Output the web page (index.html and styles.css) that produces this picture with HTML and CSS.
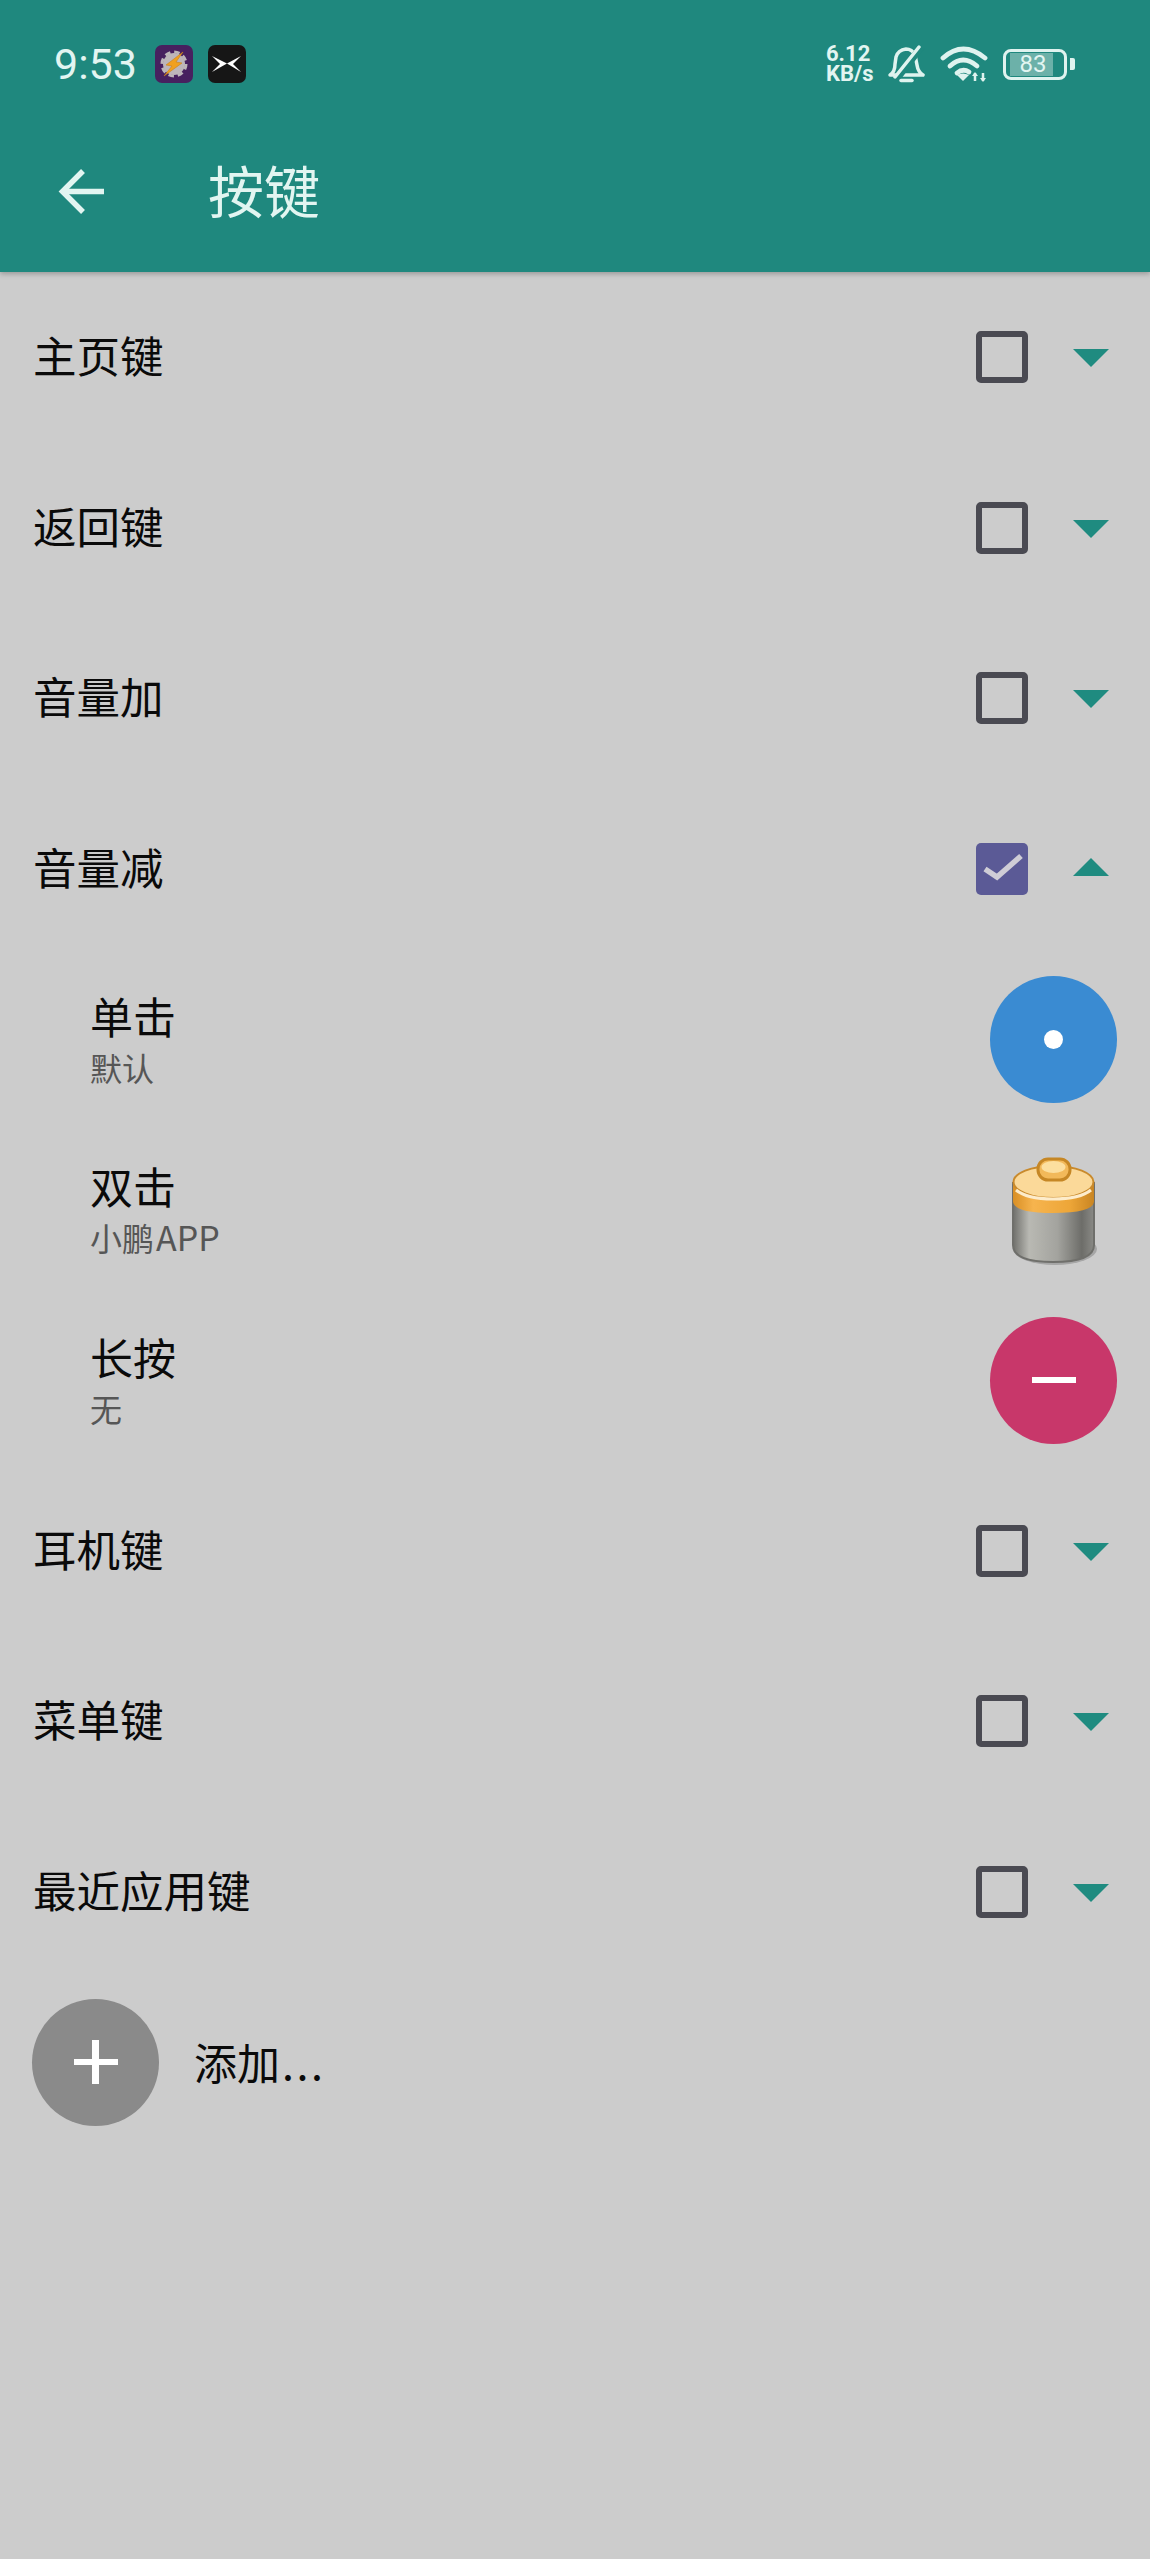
FILE: index.html
```html
<!DOCTYPE html>
<html lang="zh-CN">
<head>
    <meta charset="UTF-8">
    <meta name="viewport" content="width=device-width, initial-scale=1.0">
    <title>按键</title>
    <link rel="stylesheet" href="styles.css">
</head>
<body>
    <div id="wrapper">
        <header class="top">
            <div class="status">
                <span class="time">9:53</span>
                <svg class="app-icon tasker" viewBox="0 0 38 38">
                    <rect width="38" height="38" rx="7" fill="#47205f"/>
                    <circle cx="19" cy="19" r="11" fill="#bdb6ba"/>
                    <circle cx="19" cy="19" r="12" fill="none" stroke="#bdb6ba" stroke-width="3" stroke-dasharray="5.500 3.900"/>
                    <path d="M28 7 L11 20 L17 21 L9 31 L27 18 L21 17 Z" fill="#f0a020" stroke="#c9821a" stroke-width="0.600"/>
                </svg>
                <svg class="app-icon xpeng" viewBox="0 0 38 38">
                    <rect width="38" height="38" rx="7" fill="#161616"/>
                    <path d="M4 11 L19 18.500 L4 27 L12 19 Z M33 11 L19 18.500 L33 27 L25 19 Z" fill="#fff"/>
                </svg>
                <div class="status-right">
                    <div class="speed"><span>6.12</span><span>KB/s</span></div>
                    <svg class="ico-bell" viewBox="0 0 38 38" fill="none" stroke="#dff3ef" stroke-width="3.500" stroke-linecap="round" stroke-linejoin="round">
                        <path d="M3 30 Q8 27 8 19 L9 12 Q11 5 19 4 Q25 4 28 10 L30 20 Q31 27 36 30 Z"/>
                        <path d="M35 1 L11 32" stroke="#1f887e" stroke-width="7"/>
                        <path d="M32 2 L8 32"/>
                        <path d="M14 35.500 L25 35.500"/>
                    </svg>
                    <svg class="ico-wifi" viewBox="0 0 48 36" fill="none" stroke="#dff3ef" stroke-width="4.800" stroke-linecap="round">
                        <path d="M3 12 Q23 -6 45 12"/>
                        <path d="M10 20 Q23 8 37 20"/>
                        <path d="M17 27 Q23 22 29 26"/>
                        <path d="M23 35 L17 29 Q23 26 29 29 Z" fill="#dff3ef" stroke="none"/>
                        <path d="M35 27 L35 35 M43 27 L43 35" stroke-width="2.500" stroke-linecap="butt"/>
                        <path d="M32 30 L35 26 L38 30 Z M40 32 L43 36 L46 32 Z" fill="#dff3ef" stroke="none"/>
                    </svg>
                    <div class="battery">
                        <div class="battery-body"><span class="battery-level"></span><span class="battery-num">83</span></div>
                        <span class="battery-nub"></span>
                    </div>
                </div>
            </div>
            <div class="toolbar">
                <svg class="back" viewBox="0 0 48 48" fill="none" stroke="#e2f5f1" stroke-width="5.500">
                    <path d="M47 25.500 L6 25.500"/>
                    <path d="M26 5 L5.500 25.500 L26 46"/>
                </svg>
                <h1 class="title">按键</h1>
            </div>
        </header>

        <main class="list">
            <div class="row">
                <span class="label">主页键</span>
                <span class="check"></span>
                <span class="caret"></span>
            </div>
            <div class="row">
                <span class="label">返回键</span>
                <span class="check"></span>
                <span class="caret"></span>
            </div>
            <div class="row">
                <span class="label">音量加</span>
                <span class="check"></span>
                <span class="caret"></span>
            </div>
            <div class="row">
                <span class="label">音量减</span>
                <span class="check checked">
                    <svg viewBox="0 0 52 52" fill="none" stroke="#cfcdd6" stroke-width="5.500">
                        <path d="M9 26 L21 34 L45 13"/>
                    </svg>
                </span>
                <span class="caret up"></span>
            </div>
            <div class="row sub">
                <div class="label-stack">
                    <span class="sub-title">单击</span>
                    <span class="sub-value">默认</span>
                </div>
                <span class="round blue"><span class="dot"></span></span>
            </div>
            <div class="row sub">
                <div class="label-stack">
                    <span class="sub-title">双击</span>
                    <span class="sub-value">小鹏<span class="latin">APP</span></span>
                </div>
                <svg class="cell-icon" viewBox="0 0 127 127">
                    <defs>
                        <linearGradient id="metal" x1="0" x2="1" y1="0" y2="0">
                            <stop offset="0" stop-color="#6f6f6b"/>
                            <stop offset="0.2" stop-color="#b9b9b3"/>
                            <stop offset="0.55" stop-color="#a3a39e"/>
                            <stop offset="0.85" stop-color="#6d6d69"/>
                            <stop offset="1" stop-color="#8a8a86"/>
                        </linearGradient>
                        <linearGradient id="copper" x1="0" x2="1" y1="0" y2="0">
                            <stop offset="0" stop-color="#d98f25"/>
                            <stop offset="0.25" stop-color="#f6b44e"/>
                            <stop offset="0.7" stop-color="#eda638"/>
                            <stop offset="1" stop-color="#c98522"/>
                        </linearGradient>
                    </defs>
                    <ellipse cx="65" cy="103" rx="42" ry="16" fill="#a6a6a6"/>
                    <path d="M23 37 L23 99 Q23 116 63 116 Q104 116 104 99 L104 37 Z" fill="url(#metal)" stroke="#6f6f6b" stroke-width="2"/>
                    <path d="M23 37 L23 56 Q25 67 63 67 Q102 67 104 56 L104 37 Z" fill="url(#copper)"/>
                    <ellipse cx="63.500" cy="36" rx="40" ry="16" fill="#fbd999" stroke="#c98a2c" stroke-width="2"/>
                    <path d="M26 44 Q37 53 63 53 Q90 53 101 44" fill="none" stroke="#fdeccb" stroke-width="3"/>
                    <rect x="48" y="13" width="32" height="21" rx="10" fill="#f2b95a" stroke="#c68725" stroke-width="3"/>
                    <ellipse cx="63.500" cy="21" rx="12" ry="6" fill="#fcdf9f"/>
                </svg>
            </div>
            <div class="row sub">
                <div class="label-stack">
                    <span class="sub-title">长按</span>
                    <span class="sub-value">无</span>
                </div>
                <span class="round pink"><span class="minus"></span></span>
            </div>
            <div class="row">
                <span class="label">耳机键</span>
                <span class="check"></span>
                <span class="caret"></span>
            </div>
            <div class="row">
                <span class="label">菜单键</span>
                <span class="check"></span>
                <span class="caret"></span>
            </div>
            <div class="row">
                <span class="label">最近应用键</span>
                <span class="check"></span>
                <span class="caret"></span>
            </div>
            <div class="row add">
                <span class="round gray"><span class="plus"></span></span>
                <span class="add-label">添加<span class="dots">...</span></span>
            </div>
        </main>
    </div>
</body>
</html>
```

FILE: styles.css
```css
html, body {
    margin: 0;
    padding: 0;
}
body {
    font-family: "Noto Sans CJK SC", "Noto Sans", sans-serif;
    background-color: #cccccc;
    color: #0a0a0a;
}
#wrapper {
    width: 1150px;
    height: 2559px;
    overflow: hidden;
}

/* header */
.top {
    height: 272px;
    background-color: #1f887e;
    color: #e2f5f1;
    box-shadow: 0 2px 5px rgba(0, 0, 0, 0.25);
    position: relative;
}
.status {
    height: 128px;
    display: flex;
    align-items: center;
    padding: 0 75px 0 54px;
    box-sizing: border-box;
}
.time {
    font-family: Roboto, sans-serif;
    font-size: 43px;
    width: 101px;
}
.app-icon {
    width: 38px;
    height: 38px;
    margin-right: 15px;
}
.status-right {
    margin-left: auto;
    display: flex;
    align-items: center;
}
.speed {
    display: flex;
    flex-direction: column;
    font-family: Roboto, sans-serif;
    font-weight: 700;
    font-size: 22px;
    line-height: 20px;
    width: 61px;
}
.ico-bell {
    width: 38px;
    height: 38px;
    margin-right: 15px;
}
.ico-wifi {
    width: 48px;
    height: 36px;
    margin-right: 15px;
}
.battery {
    display: flex;
    align-items: center;
}
.battery-body {
    width: 64px;
    height: 31px;
    box-sizing: border-box;
    border: 3px solid #dff3ef;
    border-radius: 8px;
    position: relative;
    font-family: Roboto, sans-serif;
}
.battery-level {
    position: absolute;
    left: 4px;
    top: 1px;
    bottom: 1px;
    width: 43px;
    background-color: #6cb1a9;
}
.battery-num {
    position: absolute;
    left: 0;
    right: 4px;
    top: 0;
    text-align: center;
    font-size: 24px;
    line-height: 25px;
}
.battery-nub {
    width: 5px;
    height: 12px;
    margin-left: 3px;
    background-color: #dff3ef;
    border-radius: 0 2px 2px 0;
}
.toolbar {
    height: 124px;
    display: flex;
    align-items: center;
    padding-left: 57px;
}
.back {
    width: 48px;
    height: 48px;
}
.title {
    margin: 0 0 3px 103px;
    font-size: 56px;
    font-weight: 400;
    line-height: 1;
}

/* list */
.row {
    height: 170.5px;
    display: flex;
    align-items: center;
    padding: 0 41px 0 33px;
    box-sizing: border-box;
}
.label {
    font-size: 43.5px;
    padding-bottom: 5px;
    margin-right: auto;
}
.check {
    width: 52px;
    height: 52px;
    box-sizing: border-box;
    border: 6px solid #4a4a52;
    border-radius: 5px;
}
.check.checked {
    border: none;
    background-color: #5b5a96;
}
.check svg {
    display: block;
    width: 52px;
    height: 52px;
}
.caret {
    margin-left: 45px;
    margin-top: 2px;
    width: 0;
    height: 0;
    border-left: 18px solid transparent;
    border-right: 18px solid transparent;
    border-top: 18px solid #1f8b80;
}
.caret.up {
    margin-top: 0;
    margin-bottom: 4px;
    border-top: none;
    border-bottom: 18px solid #1f8b80;
}
.row.sub {
    padding: 0 33px 0 90px;
}
.label-stack {
    display: flex;
    flex-direction: column;
    padding-bottom: 5px;
    margin-right: auto;
}
.sub-title {
    font-size: 43px;
    line-height: 60px;
}
.sub-value {
    font-size: 32px;
    line-height: 44px;
    color: #565656;
}
.latin {
    font-size: 34px;
    margin-left: 2px;
}
.round {
    width: 127px;
    height: 127px;
    border-radius: 50%;
    display: flex;
    align-items: center;
    justify-content: center;
    flex: none;
}
.blue {
    background-color: #3a8bd2;
}
.pink {
    background-color: #c8376a;
}
.gray {
    background-color: #8a8a8a;
}
.dot {
    width: 19px;
    height: 19px;
    border-radius: 50%;
    background-color: #fff;
}
.minus {
    width: 44px;
    height: 6px;
    background-color: #fff;
}
.plus {
    width: 44px;
    height: 44px;
    background:
        linear-gradient(#fff, #fff) center / 44px 6px no-repeat,
        linear-gradient(#fff, #fff) center / 7px 44px no-repeat;
}
.cell-icon {
    width: 127px;
    height: 127px;
    flex: none;
    filter: blur(0.6px);
}
.row.add {
    padding-left: 32px;
}
.add-label {
    font-size: 43px;
    margin-left: 35px;
    padding-bottom: 3px;
}
.dots {
    letter-spacing: 2.500px;
    margin-left: 2px;
}
```
